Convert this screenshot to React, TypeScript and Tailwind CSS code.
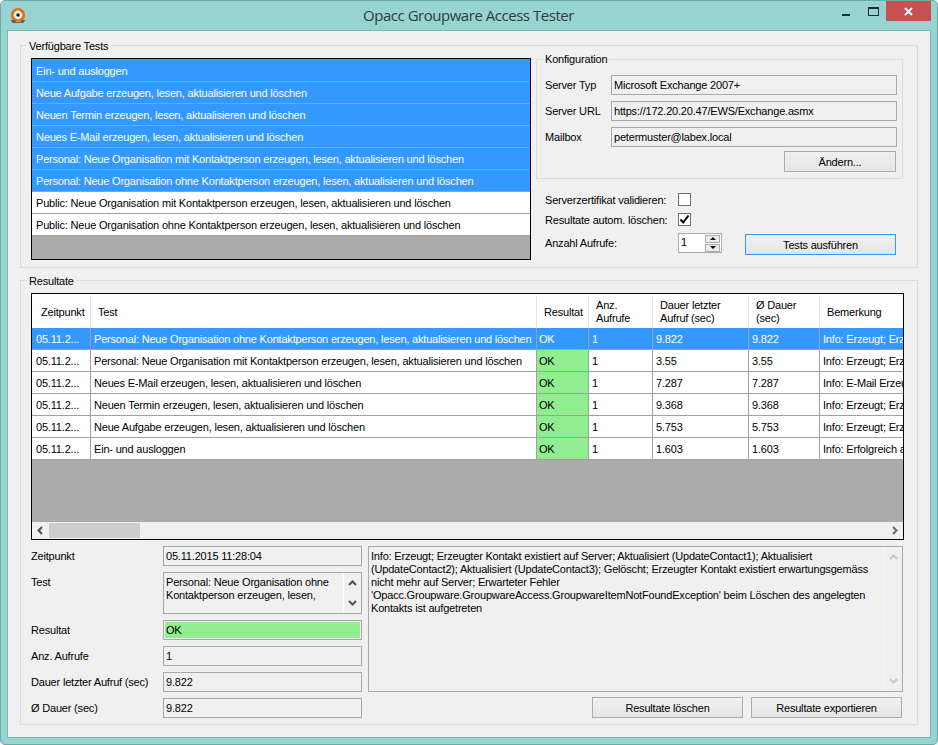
const availableTests = [
  { label: "Ein- und ausloggen", selected: true },
  { label: "Neue Aufgabe erzeugen, lesen, aktualisieren und löschen", selected: true },
  { label: "Neuen Termin erzeugen, lesen, aktualisieren und löschen", selected: true },
  { label: "Neues E-Mail erzeugen, lesen, aktualisieren und löschen", selected: true },
  { label: "Personal: Neue Organisation mit Kontaktperson erzeugen, lesen, aktualisieren und löschen", selected: true },
  { label: "Personal: Neue Organisation ohne Kontaktperson erzeugen, lesen, aktualisieren und löschen", selected: true },
  { label: "Public: Neue Organisation mit Kontaktperson erzeugen, lesen, aktualisieren und löschen", selected: false },
  { label: "Public: Neue Organisation ohne Kontaktperson erzeugen, lesen, aktualisieren und löschen", selected: false },
];

const results = [
  { test: "Personal: Neue Organisation ohne Kontaktperson erzeugen, lesen, aktualisieren und löschen", last: "9.822", avg: "9.822", note: "Info: Erzeugt; Erzeugter" },
  { test: "Personal: Neue Organisation mit Kontaktperson erzeugen, lesen, aktualisieren und löschen", last: "3.55", avg: "3.55", note: "Info: Erzeugt; Erzeugter" },
  { test: "Neues E-Mail erzeugen, lesen, aktualisieren und löschen", last: "7.287", avg: "7.287", note: "Info: E-Mail Erzeugt" },
  { test: "Neuen Termin erzeugen, lesen, aktualisieren und löschen", last: "9.368", avg: "9.368", note: "Info: Erzeugt; Erzeugter" },
  { test: "Neue Aufgabe erzeugen, lesen, aktualisieren und löschen", last: "5.753", avg: "5.753", note: "Info: Erzeugt; Erzeugter" },
  { test: "Ein- und ausloggen", last: "1.603", avg: "1.603", note: "Info: Erfolgreich angemeldet" },
];

function Chevron({ dir, color = "#505050" }: { dir: "up" | "down" | "left" | "right"; color?: string }) {
  const points = {
    up: "1,6 4.5,2.5 8,6",
    down: "1,3 4.5,6.5 8,3",
    left: "6,1 2.5,4.5 6,8",
    right: "3,1 6.5,4.5 3,8",
  }[dir];
  return (
    <svg className="h-[9px] w-[9px]" viewBox="0 0 9 9" fill="none" stroke={color} strokeWidth={2}>
      <polyline points={points} />
    </svg>
  );
}

function GroupBox({
  title,
  className,
  labelClass = "",
  children,
}: {
  title: string;
  className: string;
  labelClass?: string;
  children: React.ReactNode;
}) {
  return (
    <fieldset className={`min-w-0 border border-[#dcdcdc] ${className}`}>
      <legend className="ml-[6px] px-[2px] leading-[14px] text-black">
        <span className={labelClass}>{title}</span>
      </legend>
      {children}
    </fieldset>
  );
}

function Field({ value, className = "" }: { value: string; className?: string }) {
  return (
    <div className={`flex h-[20px] items-center border border-[#a9a9a9] bg-[#f0f0f0] pl-[2px] text-black ${className}`}>
      {value}
    </div>
  );
}

function WinButton({ label, className = "", focused = false }: { label: string; className?: string; focused?: boolean }) {
  return (
    <button
      type="button"
      className={`flex h-[21px] w-[151px] items-center justify-center border bg-linear-to-b from-[#f0f0f0] to-[#e5e5e5] pt-px text-black ${
        focused ? "border-[#3399ff]" : "border-[#acacac]"
      } ${className}`}
    >
      {label}
    </button>
  );
}

function Logo() {
  return (
    <svg className="ml-[9px] mt-[7px] h-[16px] w-[16px] shrink-0" viewBox="0 0 16 16">
      <circle cx="8" cy="7" r="7" fill="#f0640f" />
      <circle cx="8" cy="7" r="4.4" fill="#fdf6ee" />
      <circle cx="8" cy="7" r="1.7" fill="#111" />
      <path d="M0.5 12 H15.5 L13 15 H3 Z" fill="#6b5a48" />
      <path d="M5 12.5 H12 L11 14 H6 Z" fill="#e9a24c" />
    </svg>
  );
}

export default function App() {
  return (
    <div className="h-[745px] w-[938px] overflow-hidden bg-white font-['Liberation_Sans',Arial,sans-serif] text-[11px] tracking-[-0.19px]">
      <div className="flex h-[745px] w-[938px] flex-col rounded-[5px] border border-[#6da9a7] bg-[#97d3d0]">
        {/* Title bar */}
        <div className="flex h-[29px] shrink-0 items-start">
          <Logo />
          <span className="ml-[337px] mt-[4px] font-['Open_Sans',sans-serif] text-[15px] leading-[20px] tracking-[-0.47px] text-[#2f3d3d]">
            Opacc Groupware Access Tester
          </span>
          <div className="ml-auto mr-[6px] flex items-start">
            <div className="mr-[18px] mt-[13px] h-[2px] w-[8px] bg-[#1f2a2a]" />
            <div className="mr-[7px] mt-[6px] h-[9px] w-[11px] border border-t-2 border-[#1f2a2a]" />
            <div className="flex h-[20px] w-[45px] items-center justify-center bg-[#c75050]">
              <svg className="h-[9px] w-[9px]" viewBox="0 0 9 9" stroke="white" strokeWidth={2}>
                <path d="M1 1 L8 8 M8 1 L1 8" />
              </svg>
            </div>
          </div>
        </div>

        {/* Client area */}
        <div className="ml-[6px] flex h-[708px] w-[924px] flex-col border border-[#7fb9b6] bg-[#f0f0f0] px-[12px] pt-[7px]">
          <GroupBox title="Verfügbare Tests" labelClass="relative top-px" className="h-[230px] w-[898px]">
            <div className="flex pl-[10px]">
              <div className="mt-[6px] flex h-[202px] w-[500px] flex-col border border-black bg-[#ababab]">
                {availableTests.map((t, i) => (
                  <div
                    key={t.label}
                    className={`flex shrink-0 items-center whitespace-nowrap border-b border-[#a0a0a0] pl-[4px] ${
                      i === 0 ? "h-[23px] pt-[2px]" : "h-[22px] pt-px"
                    } ${t.selected ? "bg-[#3399ff] text-white" : "bg-white text-black"}`}
                  >
                    {t.label}
                  </div>
                ))}
              </div>

              <div className="ml-[5px] flex w-[367px] flex-col">
                <GroupBox title="Konfiguration" className="h-[127px] w-[367px]">
                  <div className="flex flex-col gap-[6px] pt-[9px]">
                    {[
                      ["Server Typ", "Microsoft Exchange 2007+"],
                      ["Server URL", "https://172.20.20.47/EWS/Exchange.asmx"],
                      ["Mailbox", "petermuster@labex.local"],
                    ].map(([label, value]) => (
                      <div key={label} className="flex items-center pl-[8px]">
                        <span className="w-[66px]">{label}</span>
                        <Field value={value} className="w-[286px]" />
                      </div>
                    ))}
                  </div>
                  <div className="mt-[4px] flex justify-end pr-[6px]">
                    <WinButton label="Ändern..." className="!w-[112px]" />
                  </div>
                </GroupBox>

                <div className="mt-[14px] flex flex-col pl-[9px]">
                  <div className="flex h-[13px] items-center">
                    <span className="w-[133px] pt-px">Serverzertifikat validieren:</span>
                    <div className="h-[13px] w-[13px] border border-[#707070] bg-white" />
                  </div>
                  <div className="mt-[7px] flex h-[13px] items-center">
                    <span className="w-[133px] pt-px">Resultate autom. löschen:</span>
                    <div className="flex h-[13px] w-[13px] items-center justify-center border border-[#707070] bg-white">
                      <svg className="h-[11px] w-[11px]" viewBox="0 0 11 11" fill="none" stroke="black" strokeWidth={2}>
                        <path d="M1.5 5.5 L4.2 8.5 L9.5 1.5" />
                      </svg>
                    </div>
                  </div>
                  <div className="mt-[7px] flex items-start">
                    <span className="mt-[2px] w-[133px]">Anzahl Aufrufe:</span>
                    <div className="flex h-[20px] w-[44px] items-center justify-between border border-[#abadb3] bg-white pl-[2px] pr-[1px]">
                      <span className="mb-[2px]">1</span>
                      <div className="flex w-[15px] flex-col gap-px">
                        <div className="flex h-[8px] items-center justify-center border border-[#acacac] bg-[#ececec]">
                          <div className="h-0 w-0 border-x-[3px] border-b-[3px] border-x-transparent border-b-black" />
                        </div>
                        <div className="flex h-[8px] items-center justify-center border border-[#acacac] bg-[#ececec]">
                          <div className="h-0 w-0 border-x-[3px] border-t-[3px] border-x-transparent border-t-black" />
                        </div>
                      </div>
                    </div>
                    <WinButton label="Tests ausführen" className="ml-[23px] mt-[1px]" focused />
                  </div>
                </div>
              </div>
            </div>
          </GroupBox>

          <GroupBox title="Resultate" labelClass="relative top-px" className="mt-[5px] h-[452px] w-[898px]">
            <div className="pl-[10px] pt-[6px]">
              {/* Result table */}
              <div className="flex h-[247px] w-[873px] flex-col overflow-hidden border border-black bg-[#ababab]">
                <div className="flex h-[34px] shrink-0 items-center bg-white pt-[2px] leading-[13px] text-black">
                  <div className="flex h-full w-[59px] items-center border-r border-[#e3e9f1] pl-[9px]">Zeitpunkt</div>
                  <div className="flex h-full w-[446px] items-center border-r border-[#e3e9f1] pl-[7px]">Test</div>
                  <div className="flex h-full w-[52px] items-center border-r border-[#e3e9f1] pl-[7px]">Resultat</div>
                  <div className="h-full w-[64px] border-r border-[#e3e9f1] pl-[7px] pt-[3px]">
                    Anz.
                    <br />
                    Aufrufe
                  </div>
                  <div className="h-full w-[96px] border-r border-[#e3e9f1] pl-[7px] pt-[3px]">
                    Dauer letzter
                    <br />
                    Aufruf (sec)
                  </div>
                  <div className="h-full w-[71px] border-r border-[#e3e9f1] pl-[7px] pt-[3px]">
                    Ø Dauer
                    <br />
                    (sec)
                  </div>
                  <div className="flex h-full w-[83px] items-center pl-[7px]">Bemerkung</div>
                </div>
                {results.map((r, i) => {
                  const selected = i === 0;
                  return (
                    <div
                      key={r.test}
                      className={`flex h-[22px] shrink-0 whitespace-nowrap border-b border-[#a0a0a0] ${
                        selected ? "bg-[#3399ff] text-white" : "bg-white text-black"
                      }`}
                    >
                      <div className="flex w-[59px] items-center border-r border-[#a0a0a0] pl-[4px] pt-px">05.11.2...</div>
                      <div className="flex w-[446px] items-center border-r border-[#a0a0a0] pl-[3px] pt-px">{r.test}</div>
                      <div
                        className={`flex w-[52px] items-center border-r border-[#a0a0a0] pl-[2px] pt-px ${
                          selected ? "" : "bg-[#90ee90]"
                        }`}
                      >
                        OK
                      </div>
                      <div className="flex w-[64px] items-center border-r border-[#a0a0a0] pl-[3px] pt-px">1</div>
                      <div className="flex w-[96px] items-center border-r border-[#a0a0a0] pl-[3px] pt-px">{r.last}</div>
                      <div className="flex w-[71px] items-center border-r border-[#a0a0a0] pl-[3px] pt-px">{r.avg}</div>
                      <div className="flex w-[83px] items-center overflow-hidden pl-[3px] pt-px">{r.note}</div>
                    </div>
                  );
                })}
                <div className="flex-1" />
                <div className="flex h-[17px] shrink-0 items-center bg-[#f0f0f0]">
                  <div className="flex w-[17px] justify-center">
                    <Chevron dir="left" />
                  </div>
                  <div className="h-[15px] w-[91px] bg-[#cdcdcd]" />
                  <div className="ml-auto flex w-[17px] justify-center">
                    <Chevron dir="right" color="#6a6a6a" />
                  </div>
                </div>
              </div>

              {/* Selected result details */}
              <div className="mt-[6px] flex w-[873px]">
                <div className="flex w-[331px] flex-col gap-[6px]">
                  <div className="flex items-center">
                    <span className="w-[132px]">Zeitpunkt</span>
                    <Field value="05.11.2015 11:28:04" className="w-[199px]" />
                  </div>
                  <div className="flex items-start">
                    <span className="mt-[2px] w-[132px]">Test</span>
                    <div className="flex h-[42px] w-[199px] border border-[#a9a9a9] bg-[#f0f0f0]">
                      <div className="flex-1 pl-[2px] pt-[3px] leading-[13px]">
                        Personal: Neue Organisation ohne
                        <br />
                        Kontaktperson erzeugen, lesen,
                      </div>
                      <div className="flex w-[18px] flex-col items-center justify-between border-l border-[#fafafa] py-[6px]">
                        <Chevron dir="up" />
                        <Chevron dir="down" />
                      </div>
                    </div>
                  </div>
                  <div className="flex items-center">
                    <span className="w-[132px]">Resultat</span>
                    <div className="flex h-[20px] w-[199px] items-center border border-[#a9a9a9] bg-[#90ee90] pl-[2px] shadow-[inset_0_0_0_1px_#f0f0f0]">
                      OK
                    </div>
                  </div>
                  <div className="flex items-center">
                    <span className="w-[132px]">Anz. Aufrufe</span>
                    <Field value="1" className="w-[199px]" />
                  </div>
                  <div className="flex items-center">
                    <span className="w-[132px]">Dauer letzter Aufruf (sec)</span>
                    <Field value="9.822" className="w-[199px]" />
                  </div>
                  <div className="flex items-center">
                    <span className="w-[132px]">Ø Dauer (sec)</span>
                    <Field value="9.822" className="w-[199px]" />
                  </div>
                </div>

                <div className="ml-[6px] flex w-[535px] flex-col">
                  <div className="flex h-[146px] border border-[#a9a9a9] bg-[#f0f0f0]">
                    <div className="flex-1 whitespace-nowrap pl-[2px] pt-[3px] leading-[13px]">
                      Info: Erzeugt; Erzeugter Kontakt existiert auf Server; Aktualisiert (UpdateContact1); Aktualisiert
                      <br />
                      (UpdateContact2); Aktualisiert (UpdateContact3); Gelöscht; Erzeugter Kontakt existiert erwartungsgemäss
                      <br />
                      nicht mehr auf Server; Erwarteter Fehler
                      <br />
                      'Opacc.Groupware.GroupwareAccess.GroupwareItemNotFoundException' beim Löschen des angelegten
                      <br />
                      Kontakts ist aufgetreten
                    </div>
                    <div className="flex w-[18px] flex-col items-center justify-between border-l border-[#f8f8f8] py-[6px]">
                      <Chevron dir="up" color="#c8c8c8" />
                      <Chevron dir="down" color="#c8c8c8" />
                    </div>
                  </div>
                  <div className="mt-[5px] flex justify-end gap-[8px] pr-px">
                    <WinButton label="Resultate löschen" />
                    <WinButton label="Resultate exportieren" />
                  </div>
                </div>
              </div>
            </div>
          </GroupBox>
        </div>
      </div>
    </div>
  );
}
